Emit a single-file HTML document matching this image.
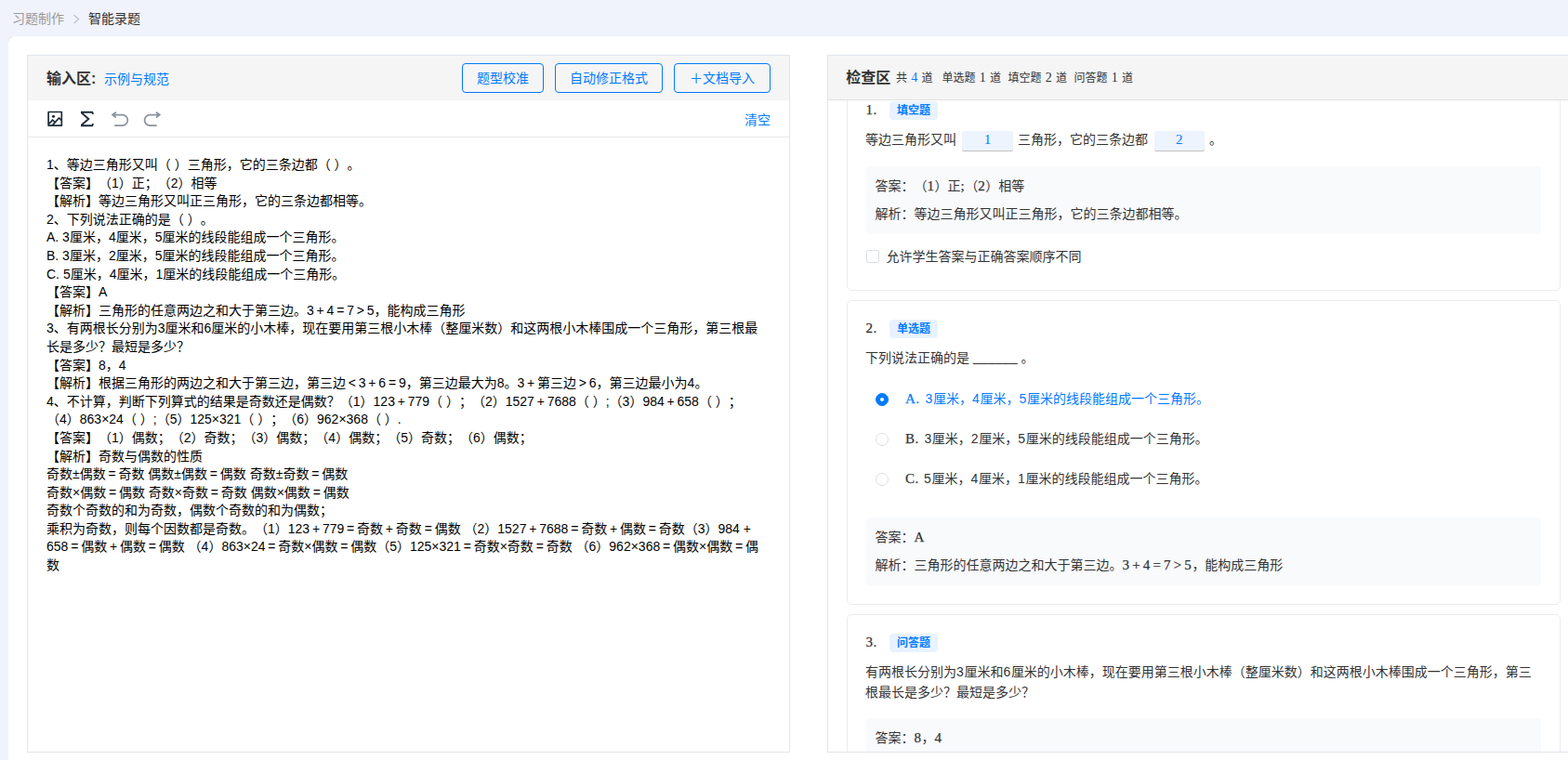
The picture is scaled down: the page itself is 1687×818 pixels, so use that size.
<!DOCTYPE html>
<html lang="zh-CN">
<head>
<meta charset="utf-8">
<title>智能录题</title>
<style>
*{box-sizing:border-box;margin:0;padding:0}
html,body{width:1687px;height:818px;overflow:hidden}
body{text-spacing-trim:space-all;background:#f0f3fb;font-family:"Liberation Sans","Noto Sans CJK SC",sans-serif;font-size:14px;color:#303133;position:relative}
.crumb{position:absolute;left:13px;top:10px;height:20px;line-height:20px;font-size:14px;color:#999;white-space:nowrap}
.crumb .sep{display:inline-block;width:26px;text-align:center;vertical-align:top}
.crumb .cur{color:#303133}
.main{position:absolute;left:9px;top:39px;width:1700px;height:800px;background:#fff;border-radius:8px 0 0 0}
.lp{position:absolute;left:29px;top:59px;width:821px;height:751px;border:1px solid #e2e5ee;background:#fff}
.hd{position:absolute;left:0;top:0;right:0;height:48px;background:#f5f5f5}
.hd .t{position:absolute;left:20px;top:1px;line-height:48px;font-size:16px;font-weight:bold;color:#333;white-space:nowrap}
.hd .lk{position:absolute;left:82px;top:1px;line-height:48px;font-size:14px;color:#007aff;white-space:nowrap}
.btn{position:absolute;top:8px;height:32px;border:1px solid #007aff;border-radius:4px;color:#007aff;font-size:14px;line-height:30px;text-align:center;white-space:nowrap;background:#f5f5f5}
.tb{position:absolute;left:0;top:48px;right:0;height:40px;border-bottom:1px solid #e8e8e8}
.tb svg{position:absolute}
.tb .clr{position:absolute;right:20px;top:0;line-height:42px;color:#007aff;font-size:14px}
.ta{position:absolute;left:20px;top:108px;width:779px;font-size:14px;line-height:19.6px;color:#000;white-space:nowrap}
.rp{position:absolute;left:890px;top:59px;width:820px;height:751px;border:1px solid #e2e5ee;background:#fff;overflow:hidden}
.rp .hd{border-bottom:1px solid #e0e0e0;height:48px;z-index:3}
.rp .hd .t{left:19.3px;top:0;line-height:47px}
.st{position:absolute;top:0;line-height:48px;word-spacing:0.9px;font-size:12px;color:#333;white-space:nowrap}
.st b{font-weight:normal;font-family:"Liberation Serif",serif;font-size:14px}
.sf{font-family:"Liberation Serif","Noto Sans CJK SC",serif;font-size:15px;letter-spacing:0.5px;-webkit-text-stroke:0.25px currentColor}
.sc{position:absolute;left:0;top:48px;width:800px;height:701px;overflow:hidden}
.card{position:absolute;left:20px;width:768px;border:1px solid #ebecef;border-radius:5px;background:#fff}
.l{position:absolute;left:19px;height:24px;line-height:24px;white-space:nowrap;color:#333;font-size:14px}
.n{position:absolute;left:19.6px;-webkit-text-stroke:0.25px currentColor;height:24px;line-height:24px;white-space:nowrap;color:#333;font-size:15px;letter-spacing:0.4px;font-family:"Liberation Serif",serif}
.tag{position:absolute;left:45px;width:52px;height:20px;line-height:20.6px;text-align:center;background:#e9f2ff;color:#007aff;font-size:12px;font-weight:bold;border-radius:4px;white-space:nowrap}
.ans{position:absolute;left:20px;width:726px;background:#f9fafc;border-radius:4px}
.ans .l{left:9.6px}
.bk{position:absolute;width:54.4px;height:20.8px;line-height:18px;text-align:center;background:#edf4fe;box-shadow:0 1px 0.6px rgba(0,0,0,.24);border-radius:2px;color:#007aff;font-family:"Liberation Serif",serif;font-size:15px}
.cb{position:absolute;left:20px;width:14px;height:14px;border:1px solid #dcdfe6;border-radius:2px;background:#fff}
.rd{position:absolute;left:30px;width:14px;height:14px;border:1px solid #dcdfe6;border-radius:50%;background:#fff}
.rd.on{border-color:#007aff;background:#007aff}
.rd.on:after{content:"";position:absolute;left:4px;top:4px;width:4px;height:4px;border-radius:50%;background:#fff}
.op{position:absolute;left:62px;margin-top:-1px;height:24px;line-height:24px;white-space:nowrap;color:#333;font-size:14px}
.op .sf{display:inline-block;width:21.6px}
.op.on{color:#007aff}
.m{word-spacing:-1.6px}
.l i,.op i{font-style:normal;letter-spacing:0.65px}
</style>
</head>
<body>
<div class="crumb"><span>习题制作</span><span class="sep"><svg width="26" height="20" viewBox="0 0 26 20"><path d="M10.6 6.1 L15.5 10.6 L10.6 15.1" fill="none" stroke="#b4b8c0" stroke-width="1.1"/></svg></span><span class="cur">智能录题</span></div>
<div class="main" style="background:#ececee;border-radius:3px 0 0 0"></div><div class="main"></div>
<div class="lp">
  <div class="hd">
    <span class="t">输入区:</span><span class="lk">示例与规范</span>
    <div class="btn" style="left:467px;width:88px">题型校准</div>
    <div class="btn" style="left:567px;width:116px">自动修正格式</div>
    <div class="btn" style="left:695px;width:104px">＋文档导入</div>
  </div>
  <div class="tb">
    <svg style="left:20px;top:11px" width="18" height="18" viewBox="0 0 18 18"><rect x="2.1" y="1.5" width="14.2" height="14.6" rx="0.2" fill="none" stroke="#1f2b3a" stroke-width="1.7"/><circle cx="7.5" cy="6.3" r="1.55" fill="#1f2b3a"/><path d="M2.4 14.6 L6.5 10.2 L9 12.4 M6.2 16.1 L13.5 8 L16.4 10.7" fill="none" stroke="#1f2b3a" stroke-width="1.7"/></svg>
    <svg style="left:57px;top:11px" width="16" height="18" viewBox="0 0 16 18"><path d="M13.2 3.8 L12.2 1.8 H0.8 V2.5 L8.3 9 L0.8 15.5 V16.2 H12.2 L13.2 14.2" fill="none" stroke="#1f2b3a" stroke-width="1.9" stroke-linejoin="miter"/></svg>
    <svg style="left:89px;top:10px" width="22" height="20" viewBox="0 0 22 20"><path d="M5.9 2.7 L2 5.6 L5.9 8.5 M2 5.6 H12.6 A5.75 5.75 0 0 1 12.6 17.1 H4.2" fill="none" stroke="#8a929c" stroke-width="1.7"/></svg>
    <svg style="left:123px;top:10px" width="22" height="20" viewBox="0 0 22 20"><path d="M14.9 2.7 L18.8 5.6 L14.9 8.5 M18.8 5.6 H8.3 A5.75 5.75 0 0 0 8.3 17.1 H15.7" fill="none" stroke="#8a929c" stroke-width="1.7"/></svg>
    <span class="clr">清空</span>
  </div>
  <div class="ta">1、等边三角形又叫（ ）三角形，它的三条边都（ ）。<br>
【答案】（1）正；（2）相等<br>
【解析】等边三角形又叫正三角形，它的三条边都相等。<br>
2、下列说法正确的是（ ）。<br>
A. 3厘米，4厘米，5厘米的线段能组成一个三角形。<br>
B. 3厘米，2厘米，5厘米的线段能组成一个三角形。<br>
C. 5厘米，4厘米，1厘米的线段能组成一个三角形。<br>
【答案】A<br>
【解析】三角形的任意两边之和大于第三边。3 + 4 = 7 &gt; 5，能构成三角形<br>
3、有两根长分别为3厘米和6厘米的小木棒，现在要用第三根小木棒（整厘米数）和这两根小木棒围成一个三角形，第三根最<br>
长是多少？最短是多少？<br>
【答案】8，4<br>
【解析】根据三角形的两边之和大于第三边，第三边 &lt; 3 + 6 = 9，第三边最大为8。3 + 第三边 &gt; 6，第三边最小为4。<br>
4、不计算，判断下列算式的结果是奇数还是偶数？（1）123 + 779（ ）；（2）1527 + 7688（ ）;（3）984 + 658（ ）；<br>
（4）863×24（ ）;（5）125×321（ ）；（6）962×368（ ）.<br>
【答案】（1）偶数；（2）奇数；（3）偶数；（4）偶数；（5）奇数；（6）偶数；<br>
【解析】奇数与偶数的性质<br>
奇数±偶数 = 奇数 偶数±偶数 = 偶数 奇数±奇数 = 偶数<br>
奇数×偶数 = 偶数 奇数×奇数 = 奇数 偶数×偶数 = 偶数<br>
奇数个奇数的和为奇数，偶数个奇数的和为偶数；<br>
乘积为奇数，则每个因数都是奇数。（1）123 + 779 = 奇数 + 奇数 = 偶数 （2）1527 + 7688 = 奇数 + 偶数 = 奇数（3）984 +<br>
658 = 偶数 + 偶数 = 偶数 （4）863×24 = 奇数×偶数 = 偶数（5）125×321 = 奇数×奇数 = 奇数 （6）962×368 = 偶数×偶数 = 偶<br>
数</div>
</div>
<div class="rp">
  <div class="hd"><span class="t">检查区</span>
    <span class="st" style="left:73px">共 <b style="color:#007aff">4</b> 道</span>
    <span class="st" style="left:122.5px">单选题 <b>1</b> 道</span>
    <span class="st" style="left:193.5px">填空题 <b>2</b> 道</span>
    <span class="st" style="left:264.5px">问答题 <b>1</b> 道</span>
  </div>
  <div class="sc">
    <div class="card" style="top:-20px;height:225px">
      <span class="n" style="top:17px">1.</span>
      <span class="tag" style="top:20px">填空题</span>
      <span class="l" style="top:49px">等边三角形又叫</span>
      <span class="bk" style="left:123.2px;top:52px">1</span>
      <span class="l" style="top:49px;left:183px">三角形，它的三条边都</span>
      <span class="bk" style="left:329.6px;top:52px">2</span>
      <span class="l" style="top:49px;left:389px">。</span>
      <div class="ans" style="top:90px;height:73px">
        <span class="l" style="top:9px">答案：（<span class="sf">1</span>）正<span class="sf">;</span>（<span class="sf">2</span>）相等</span>
        <span class="l" style="top:39px">解析：等边三角形又叫正三角形，它的三条边都相等。</span>
      </div>
      <span class="cb" style="top:180px"></span>
      <span class="l" style="top:175px;left:41.5px">允许学生答案与正确答案顺序不同</span>
    </div>
    <div class="card" style="top:215px;height:328px">
      <span class="n" style="top:17px">2.</span>
      <span class="tag" style="top:20px">单选题</span>
      <span class="l" style="top:49px">下列说法正确的是 <span style="letter-spacing:0.17px;position:relative;top:-1px">______</span> 。</span>
      <span class="rd on" style="top:99px"></span>
      <span class="op on" style="top:94px"><span class="sf">A.</span><i>3</i>厘米，<i>4</i>厘米，<i>5</i>厘米的线段能组成一个三角形。</span>
      <span class="rd" style="top:142px"></span>
      <span class="op" style="top:137px"><span class="sf" style="width:20.4px">B.</span><i>3</i>厘米，<i>2</i>厘米，<i>5</i>厘米的线段能组成一个三角形。</span>
      <span class="rd" style="top:185px"></span>
      <span class="op" style="top:180px"><span class="sf" style="width:20.1px">C.</span><i>5</i>厘米，<i>4</i>厘米，<i>1</i>厘米的线段能组成一个三角形。</span>
      <div class="ans" style="top:233px;height:73px">
        <span class="l" style="top:9px">答案：<span class="sf">A</span></span>
        <span class="l" style="top:39px">解析：三角形的任意两边之和大于第三边。<span class="sf m">3 + 4 = 7 &gt; 5</span>，能构成三角形</span>
      </div>
    </div>
    <div class="card" style="top:553px;height:328px">
      <span class="n" style="top:17px">3.</span>
      <span class="tag" style="top:20px">问答题</span>
      <span class="l" style="top:49px">有两根长分别为<i>3</i>厘米和<i>6</i>厘米的小木棒，现在要用第三根小木棒（整厘米数）和这两根小木棒围成一个三角形，第三</span>
      <span class="l" style="top:71px">根最长是多少？最短是多少？</span>
      <div class="ans" style="top:111px;height:73px">
        <span class="l" style="top:9px">答案：<span class="sf">8</span>，<span class="sf">4</span></span>
      </div>
    </div>
  </div>
</div>
</body>
</html>
